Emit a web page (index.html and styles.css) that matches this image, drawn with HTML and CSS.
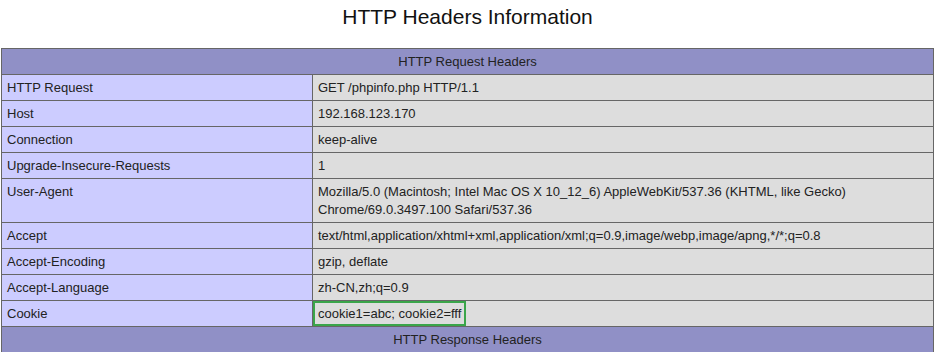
FILE: index.html
```html
<!DOCTYPE html>
<html>
<head>
<meta charset="utf-8">
<title>HTTP Headers Information</title>
<link rel="stylesheet" href="styles.css">
</head>
<body>
<h1 class="title">HTTP Headers Information</h1>
<table class="info">
<tr class="h"><th colspan="2">HTTP Request Headers</th></tr>
<tr><td class="e">HTTP Request</td><td class="v">GET /phpinfo.php HTTP/1.1</td></tr>
<tr><td class="e">Host</td><td class="v">192.168.123.170</td></tr>
<tr><td class="e">Connection</td><td class="v">keep-alive</td></tr>
<tr><td class="e">Upgrade-Insecure-Requests</td><td class="v">1</td></tr>
<tr><td class="e">User-Agent</td><td class="v">Mozilla/5.0 (Macintosh; Intel Mac OS X 10_12_6) AppleWebKit/537.36 (KHTML, like Gecko)<br>Chrome/69.0.3497.100 Safari/537.36</td></tr>
<tr><td class="e">Accept</td><td class="v">text/html,application/xhtml+xml,application/xml;q=0.9,image/webp,image/apng,*/*;q=0.8</td></tr>
<tr><td class="e">Accept-Encoding</td><td class="v">gzip, deflate</td></tr>
<tr><td class="e">Accept-Language</td><td class="v">zh-CN,zh;q=0.9</td></tr>
<tr><td class="e">Cookie</td><td class="v vmark"><span class="mark">cookie1=abc; cookie2=fff</span></td></tr>
<tr class="h"><th colspan="2">HTTP Response Headers</th></tr>
</table>
</body>
</html>
```
FILE: styles.css
```css
html, body {
  margin: 0;
  padding: 0;
  background: #fff;
  font-family: "Liberation Sans", Arial, sans-serif;
  color: #222;
}
body {
  padding: 0 1px;
}
.title {
  margin: 0;
  padding: 5px 0 19px;
  font-size: 21px;
  line-height: 24px;
  font-weight: normal;
  text-align: center;
  color: #111;
}
.info {
  width: 100%;
  border-collapse: collapse;
  border: 1px solid #666;
  font-size: 13px;
  line-height: 18px;
}
.info th, .info td {
  border: 1px solid #666;
  padding: 4px 5px 3px;
  text-align: left;
  vertical-align: top;
  font-weight: normal;
}
.info .h th {
  background: #9090c6;
  text-align: center;
}
.info .e {
  width: 300px;
  background: #ccf;
}
.info .v {
  background: #ddd;
}
.info .vmark {
  padding: 0;
}
.mark {
  display: inline-block;
  border: 2px solid #3aa54a;
  padding: 2px 3px 1px;
}
```
